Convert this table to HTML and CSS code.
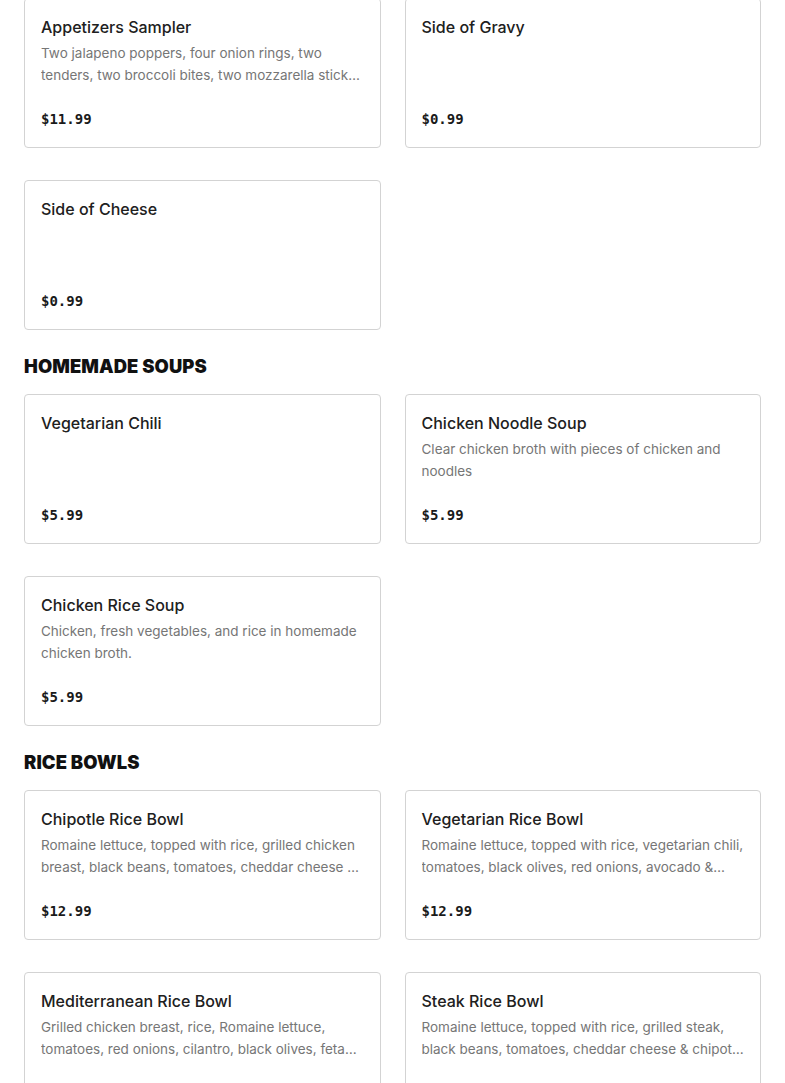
FILE: index.html
```html
<!DOCTYPE html>
<html lang="en">
<head>
<meta charset="utf-8">
<title>Menu</title>
<link rel="stylesheet" href="styles.css">
</head>
<body>
<main class="menu">
  <section class="section first">
    <div class="grid">
      <article class="card">
        <h3 class="title">Appetizers Sampler</h3>
        <p class="desc">Two jalapeno poppers, four onion rings, two tenders, two broccoli bites, two mozzarella sticks and fries</p>
        <div class="price">$11.99</div>
      </article>
      <article class="card">
        <h3 class="title">Side of Gravy</h3>
        <p class="desc"></p>
        <div class="price">$0.99</div>
      </article>
      <article class="card">
        <h3 class="title">Side of Cheese</h3>
        <p class="desc"></p>
        <div class="price">$0.99</div>
      </article>
    </div>
  </section>
  <section class="section">
    <h2 class="heading">HOMEMADE SOUPS</h2>
    <div class="grid">
      <article class="card">
        <h3 class="title">Vegetarian Chili</h3>
        <p class="desc"></p>
        <div class="price">$5.99</div>
      </article>
      <article class="card">
        <h3 class="title">Chicken Noodle Soup</h3>
        <p class="desc">Clear chicken broth with pieces of chicken and noodles</p>
        <div class="price">$5.99</div>
      </article>
      <article class="card">
        <h3 class="title">Chicken Rice Soup</h3>
        <p class="desc">Chicken, fresh vegetables, and rice in homemade chicken broth.</p>
        <div class="price">$5.99</div>
      </article>
    </div>
  </section>
  <section class="section">
    <h2 class="heading">RICE BOWLS</h2>
    <div class="grid">
      <article class="card">
        <h3 class="title">Chipotle Rice Bowl</h3>
        <p class="desc">Romaine lettuce, topped with rice, grilled chicken breast, black beans, tomatoes, cheddar cheese &amp; chipotle sauce</p>
        <div class="price">$12.99</div>
      </article>
      <article class="card">
        <h3 class="title">Vegetarian Rice Bowl</h3>
        <p class="desc">Romaine lettuce, topped with rice, vegetarian chili, tomatoes, black olives, red onions, avocado &amp; cheddar cheese</p>
        <div class="price">$12.99</div>
      </article>
      <article class="card">
        <h3 class="title">Mediterranean Rice Bowl</h3>
        <p class="desc">Grilled chicken breast, rice, Romaine lettuce, tomatoes, red onions, cilantro, black olives, feta cheese &amp; tzatziki</p>
        <div class="price">$12.99</div>
      </article>
      <article class="card">
        <h3 class="title">Steak Rice Bowl</h3>
        <p class="desc">Romaine lettuce, topped with rice, grilled steak, black beans, tomatoes, cheddar cheese &amp; chipotle sauce</p>
        <div class="price">$12.99</div>
      </article>
    </div>
  </section>
</main>
</body>
</html>
```
FILE: styles.css
```css
html, body {
  margin: 0;
  padding: 0;
  background: #ffffff;
}

body {
  font-family: "Inter", "Open Sans", sans-serif;
  color: #1f1f1f;
}

.menu {
  padding: 0 24px;
}

.section.first {
  margin-top: -2px;
}

.heading {
  font-family: "Inter", "Liberation Sans", sans-serif;
  font-weight: 900;
  font-size: 18.4px;
  line-height: 24px;
  letter-spacing: 0.1px;
  color: #111111;
  margin: 24px 0 16px;
}

.grid {
  display: grid;
  grid-template-columns: 1fr 1fr;
  column-gap: 24px;
  row-gap: 32px;
}

.card {
  box-sizing: border-box;
  height: 150px;
  border: 1px solid #d3d3d3;
  border-radius: 4px;
  padding: 16px 16px 18px;
  display: flex;
  flex-direction: column;
  min-width: 0;
}

.title {
  margin: 0;
  font-size: 16px;
  font-weight: 500;
  line-height: 24px;
  color: #202020;
}

.desc {
  margin: 3px 0 0;
  font-size: 13.5px;
  line-height: 22px;
  height: 44px;
  color: #767676;
  display: -webkit-box;
  -webkit-line-clamp: 2;
  -webkit-box-orient: vertical;
  overflow: hidden;
}

.price {
  margin-top: auto;
  font-family: "DejaVu Sans Mono", "Liberation Mono", monospace;
  font-weight: bold;
  font-size: 14px;
  line-height: 20px;
  color: #1a1a1a;
}
```
